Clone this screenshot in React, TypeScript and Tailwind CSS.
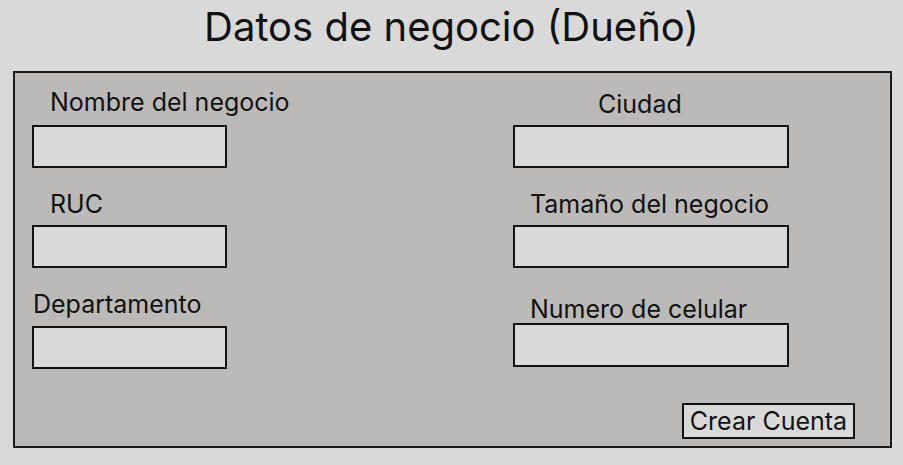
import React from "react";

export default function App() {
  return (
    <div className="w-[903px] h-[465px] bg-[#d9d9d9] text-[#111] font-['Inter','Noto_Sans',sans-serif] overflow-hidden">
      <h1 className="h-[71px] pt-[3px] text-center text-[40px] leading-[48px] font-normal">
        Datos de negocio (Dueño)
      </h1>
      <div className="ml-[13px] w-[879px] h-[377px] border-2 border-[#1a1a1a] bg-[#bbbab8] flex">
        <div className="w-[498px] flex flex-col">
          <div className="mt-[17px] ml-[35px] h-[24px] text-[25px] leading-[24px]">Nombre del negocio</div>
          <div className="mt-[11px] ml-[17px] w-[195px] h-[43px] border-2 border-[#111] bg-[#d9d9d9]" />
          <div className="mt-[24px] ml-[35px] h-[24px] text-[25px] leading-[24px]">RUC</div>
          <div className="mt-[9px] ml-[17px] w-[195px] h-[43px] border-2 border-[#111] bg-[#d9d9d9]" />
          <div className="mt-[24px] ml-[18px] h-[24px] text-[25px] leading-[24px]">Departamento</div>
          <div className="mt-[10px] ml-[17px] w-[195px] h-[43px] border-2 border-[#111] bg-[#d9d9d9]" />
        </div>
        <div className="flex-1 flex flex-col">
          <div className="mt-[19px] ml-[85px] h-[24px] text-[25px] leading-[24px]">Ciudad</div>
          <div className="mt-[9px] w-[276px] h-[43px] border-2 border-[#111] bg-[#d9d9d9]" />
          <div className="mt-[24px] ml-[17px] h-[24px] text-[25px] leading-[24px]">Tamaño del negocio</div>
          <div className="mt-[9px] w-[276px] h-[43px] border-2 border-[#111] bg-[#d9d9d9]" />
          <div className="mt-[29px] ml-[17px] h-[24px] text-[25px] leading-[24px]">Numero de celular</div>
          <div className="mt-[2px] w-[276px] h-[44px] border-2 border-[#111] bg-[#d9d9d9]" />
          <button className="mt-[36px] ml-[169px] w-[173px] h-[36px] border-2 border-[#111] bg-[#d9d9d9] text-[25px] leading-[24px] flex items-center justify-center">
            Crear Cuenta
          </button>
        </div>
      </div>
    </div>
  );
}
